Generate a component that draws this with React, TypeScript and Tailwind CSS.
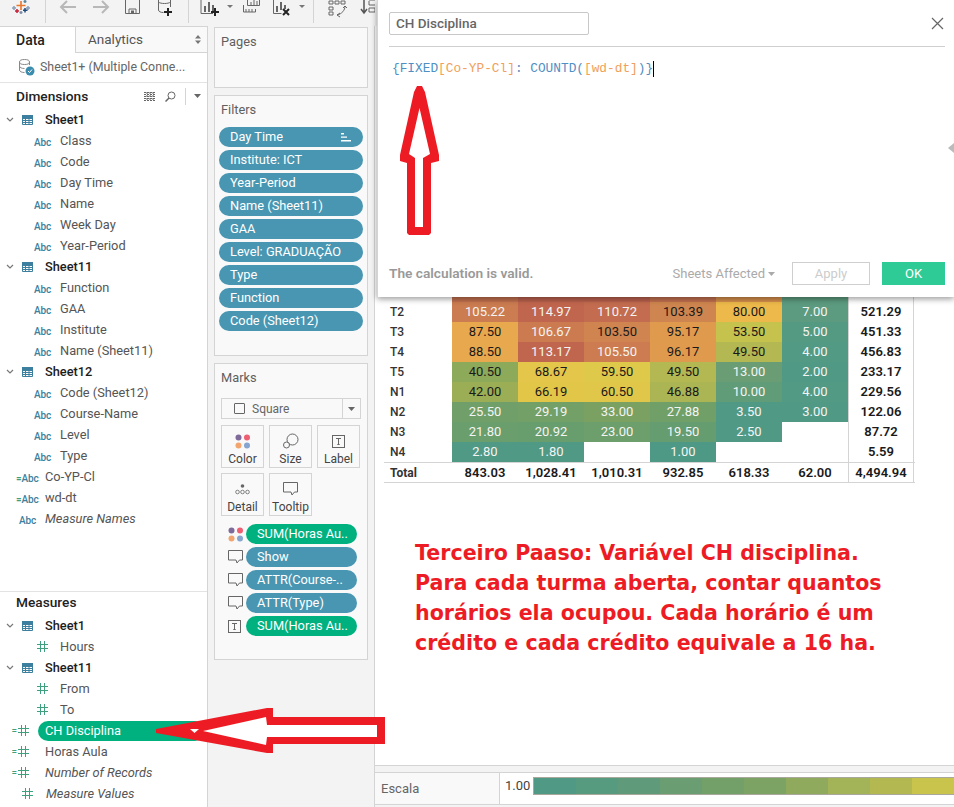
import React from "react";

const Chevron = () => (
  <svg width="8" height="6" viewBox="0 0 8 6" className="shrink-0">
    <path d="M1 1l3 3 3-3" fill="none" stroke="#777" strokeWidth="1.2" />
  </svg>
);

const TableIcon = () => (
  <svg width="11" height="10" viewBox="0 0 11 10" className="shrink-0">
    <path d="M.5.5h10v9H.5zM.5 3.5h10M.5 5.5h10M.5 7.5h10M3.5 3.5v6M7 3.5v6" fill="none" stroke="#3c7f9e" strokeWidth="1" />
    <rect x="0" y="0" width="11" height="3" fill="#3c7f9e" />
  </svg>
);

const Hash = () => (
  <svg width="11" height="11" viewBox="0 0 11 11" className="shrink-0">
    <path d="M3.5 0v11M7.5 0v11M0 3.5h11M0 7.5h11" stroke="#3fa07d" strokeWidth="1" fill="none" />
  </svg>
);

const Abc = ({ eq }: { eq?: boolean }) => (
  <span className="text-[10px] font-medium text-[#3c7f9e] leading-none tracking-[-0.1px]">
    {eq && <span className="text-[#3fa07d]">=</span>}
    Abc
  </span>
);

const SheetRow = ({ name }: { name: string }) => (
  <div className="h-[21px] flex items-center">
    <span className="ml-[6px] w-[16px] flex"><Chevron /></span>
    <TableIcon />
    <span className="ml-[12px] text-[12.8px] font-medium text-[#1c1c1c]">{name}</span>
  </div>
);

const DimRow = ({ name }: { name: string }) => (
  <div className="h-[21px] flex items-center">
    <span className="w-[34px]" />
    <span className="w-[26px]"><Abc /></span>
    <span className="text-[12.8px] text-[#555]">{name}</span>
  </div>
);

const CalcDim = ({ name }: { name: string }) => (
  <div className="h-[21px] flex items-center">
    <span className="w-[16px]" />
    <span className="w-[29px]"><Abc eq /></span>
    <span className="text-[12.8px] text-[#555]">{name}</span>
  </div>
);

const MeasRow = ({ name }: { name: string }) => (
  <div className="h-[21px] flex items-center">
    <span className="w-[37px]" />
    <span className="w-[23px]"><Hash /></span>
    <span className="text-[12.8px] text-[#555]">{name}</span>
  </div>
);

const CalcMeas = ({ name, italic }: { name: string; italic?: boolean }) => (
  <div className="h-[21px] flex items-center">
    <span className="w-[18px] text-[10px] text-[#3fa07d] leading-none text-right pr-[1px]">=</span>
    <span className="w-[27px]"><Hash /></span>
    <span className={italic ? "text-[12.8px] italic text-[#555]" : "text-[12.8px] text-[#555]"}>{name}</span>
  </div>
);

const Pill = ({ children, green, w, icon }: { children: React.ReactNode; green?: boolean; w: string; icon?: boolean }) => (
  <div
    className={`${w} h-[20px] rounded-full flex items-center justify-between pl-[11px] pr-[12px] text-[12.8px] text-white whitespace-nowrap ${green ? "bg-[#00b180]" : "bg-[#4996b2]"}`}
  >
    <span>{children}</span>
    {icon && (
      <svg width="10" height="10" viewBox="0 0 10 10">
        <path d="M0 1h3v1.4H0zM0 4.4h6v1.4H0zM0 8h10v1.6H0z" fill="#fff" />
      </svg>
    )}
  </div>
);

const Bubble = () => (
  <svg width="15" height="14" viewBox="0 0 15 14">
    <path d="M.5.5h14v9.5h-3l-2.5 3-1-3H.5z" fill="none" stroke="#666" strokeWidth="1" />
  </svg>
);

const Dots = () => (
  <svg width="16" height="15" viewBox="0 0 16 15">
    <circle cx="3.5" cy="3.5" r="3" fill="#7f6b9a" />
    <circle cx="12" cy="3.5" r="3" fill="#ee5f73" />
    <circle cx="3.5" cy="11.5" r="3" fill="#f2a56f" />
    <circle cx="12" cy="11.5" r="3" fill="#86a5cf" />
  </svg>
);

const TBox = () => (
  <svg width="13" height="13" viewBox="0 0 13 13">
    <rect x=".5" y=".5" width="12" height="12" fill="none" stroke="#666" />
    <path d="M4 3.5h5M6.5 3.5v6M5.3 9.5h2.4" stroke="#666" fill="none" />
  </svg>
);

const SizeIcon = () => (
  <svg width="16" height="16" viewBox="0 0 16 16">
    <circle cx="9.5" cy="6.5" r="5.5" fill="none" stroke="#666" />
    <circle cx="3.5" cy="12" r="3" fill="#f9f9f9" stroke="#666" />
  </svg>
);

const DetailIcon = () => (
  <svg width="15" height="11" viewBox="0 0 15 11">
    <circle cx="7.5" cy="2" r="1.8" fill="#666" />
    <circle cx="2.5" cy="8" r="1.8" fill="none" stroke="#666" strokeWidth=".8" />
    <circle cx="7.5" cy="8" r="1.8" fill="none" stroke="#666" strokeWidth=".8" />
    <circle cx="12.5" cy="8" r="1.8" fill="none" stroke="#666" strokeWidth=".8" />
  </svg>
);

const Card = ({ icon, label }: { icon: React.ReactNode; label: string }) => (
  <div className="h-[43px] border border-[#d4d4d4] flex flex-col items-center pt-[6px]">
    <div className="h-[18px] flex items-center">{icon}</div>
    <div className="text-[12px] leading-[16px] text-[#444] mt-[1px]">{label}</div>
  </div>
);

const Toolbar = () => (
  <div className="h-[26px] relative shrink-0 bg-[#f3f3f3]">
    <svg width="375" height="26" viewBox="0 0 375 26" className="block">
      <g strokeWidth="1.5" fill="none">
        <path d="M21 1v9M16.500 5.500h9" stroke="#e8762b" strokeWidth="1.6" />
        <path d="M14 6v4M12 8h4" stroke="#8aa0b8" />
        <path d="M28 6v4M26 8h4" stroke="#8aa0b8" />
        <path d="M17 9v4M15 11h4" stroke="#c72037" />
        <path d="M25 8v4.500M23 10.300h4.500" stroke="#1f4b7a" />
        <path d="M21 11v3M19.500 12.500h3" stroke="#7b8ea6" />
        <path d="M25 0v3M23.500 1.500h3" stroke="#5b879b" />
      </g>
      <path d="M45.500 0v23M188.500 0v23M313.500 0v23" stroke="#d4d4d4" />
      <path d="M76 7H61M67 1l-6 6 6 6M93 7h15M102 1l6 6-6 6" fill="none" stroke="#b8b8b8" strokeWidth="2" />
      <path d="M125.500 0v13.500h14V0M129 13.500V9h7v4.500" fill="none" stroke="#666" />
      <rect x="131" y="10.500" width="3" height="3" fill="#666" />
      <path d="M158.500 0v10c0 1.500 2 2.500 5 2.500M170.500 0v7" fill="none" stroke="#666" />
      <path d="M158.500 2c2 2 10 2 12 0" fill="none" stroke="#666" />
      <path d="M168 8v8M164 12h8" stroke="#222" strokeWidth="2" />
      <path d="M201 0v13.500h12" fill="none" stroke="#666" />
      <path d="M205 12V6M209 12V2M213 12V5" stroke="#666" strokeWidth="2" />
      <path d="M215 8v8M211 12h8" stroke="#222" strokeWidth="2" />
      <path d="M227 5h6l-3 3z" fill="#777" />
      <path d="M243.500 5v7h12V9M246 9v3M249 9v3M252 9v3" fill="none" stroke="#666" />
      <path d="M247.500 0v5.500h12V0M251 2v3M254 0v5M257 1v4" fill="none" stroke="#666" />
      <path d="M273.500 0v13.500h8" fill="none" stroke="#666" />
      <path d="M277 12V6M281 10V2M285 9V5" stroke="#666" strokeWidth="2" />
      <path d="M283 9l6 6M289 9l-6 6" stroke="#222" strokeWidth="2" />
      <path d="M299 5h6l-3 3z" fill="#777" />
      <path d="M329 1h4v3h-4zM335 1h4v3h-4zM341 1h4v3h-4zM329 7h4v3h-4zM329 12h4v3h-4z" fill="none" stroke="#666" />
      <path d="M345 6c0 4-3 8-8 9M345 6l-2 2M345 6l2 2M337 15l3-2M337 15l3 2" fill="none" stroke="#666" />
      <path d="M364 0v12M361 9l3 4 3-4" fill="none" stroke="#555" strokeWidth="1.500" />
      <path d="M369 0h6M369 1v4h6M369 8h6v4h-6z" fill="none" stroke="#666" />
    </svg>
  </div>
);

const LeftPanel = () => (
  <div className="w-[208px] shrink-0 bg-white border-r border-t border-[#d4d4d4] flex flex-col pb-[3px]">
    <div className="h-[26px] flex shrink-0">
      <div className="w-[75px] flex items-center pl-[16px] text-[14px] font-medium text-[#222]">Data</div>
      <div className="flex-1 bg-[#f9f9f9] border-l border-b border-[#d4d4d4] flex items-center pl-[12px] pr-[6px] justify-between">
        <span className="text-[13.5px] text-[#555]">Analytics</span>
        <svg width="6" height="9" viewBox="0 0 6 9">
          <path d="M3 0l3 3.500H0zM3 9L0 5.500h6z" fill="#777" />
        </svg>
      </div>
    </div>
    <div className="h-[30px] shrink-0 border-b border-[#e3e3e3] flex items-center pl-[18px]">
      <svg width="17" height="17" viewBox="0 0 17 17">
        <ellipse cx="6.500" cy="3" rx="5" ry="2.500" fill="none" stroke="#888" />
        <path d="M1.500 3v8c0 1.500 2 2.500 5 2.500M11.500 3v3M1.500 7c0 1.500 2 2.500 5 2.500" fill="none" stroke="#888" />
        <circle cx="12" cy="12" r="4.500" fill="#3c8cae" />
        <path d="M10 12l1.500 1.500 2.500-3" stroke="#fff" fill="none" />
      </svg>
      <span className="ml-[5px] text-[12.4px] text-[#666] whitespace-nowrap">Sheet1+ (Multiple Conne...</span>
    </div>
    <div className="h-[26px] shrink-0 flex items-center pl-[16px] pr-[6px]">
      <span className="text-[13.7px] font-medium text-[#222] flex-1">Dimensions</span>
      <svg width="12" height="9" viewBox="0 0 12 9">
        <path d="M0 .5h12M0 2.500h12M0 4.500h12M0 6.500h12M0 8.500h12M3 0v9M6 0v9M9 0v9" stroke="#666" strokeWidth="1" strokeDasharray="2 1" fill="none" />
      </svg>
      <svg width="11" height="11" viewBox="0 0 11 11" className="ml-[9px]">
        <circle cx="6.500" cy="4.500" r="3.500" fill="none" stroke="#666" />
        <path d="M4 7L.5 10.500" stroke="#666" strokeWidth="1.500" />
      </svg>
      <div className="w-px h-[17px] bg-[#d4d4d4] ml-[9px] mr-[8px]" />
      <svg width="7" height="4" viewBox="0 0 7 4">
        <path d="M0 0h7L3.500 4z" fill="#666" />
      </svg>
    </div>
    <SheetRow name="Sheet1" />
    {["Class", "Code", "Day Time", "Name", "Week Day", "Year-Period"].map((n) => <DimRow key={n} name={n} />)}
    <SheetRow name="Sheet11" />
    {["Function", "GAA", "Institute", "Name (Sheet11)"].map((n) => <DimRow key={n} name={n} />)}
    <SheetRow name="Sheet12" />
    {["Code (Sheet12)", "Course-Name", "Level", "Type"].map((n) => <DimRow key={n} name={n} />)}
    <CalcDim name="Co-YP-Cl" />
    <CalcDim name="wd-dt" />
    <div className="h-[21px] flex items-center">
      <span className="w-[19px]" />
      <span className="w-[26px]"><Abc /></span>
      <span className="text-[12.8px] italic text-[#555]">Measure Names</span>
    </div>
    <div className="flex-1" />
    <div className="border-t border-[#e3e3e3] h-[24px] shrink-0 flex items-center pl-[16px] pb-[3px] text-[13.7px] font-medium text-[#222]">Measures</div>
    <SheetRow name="Sheet1" />
    <MeasRow name="Hours" />
    <SheetRow name="Sheet11" />
    <MeasRow name="From" />
    <MeasRow name="To" />
    <div className="h-[21px] flex items-center relative">
      <span className="w-[18px] text-[10px] text-[#3fa07d] leading-none text-right pr-[1px]">=</span>
      <span className="w-[20px]"><Hash /></span>
      <div className="w-[167px] h-[20px] rounded-full bg-[#00b180] flex items-center pl-[7px] text-[12.8px] text-white">CH Disciplina</div>
    </div>
    <CalcMeas name="Horas Aula" />
    <CalcMeas name="Number of Records" italic />
    <div className="h-[21px] flex items-center">
      <span className="w-[22px]" />
      <span className="w-[24px]"><Hash /></span>
      <span className="text-[12.8px] italic text-[#555]">Measure Values</span>
    </div>
  </div>
);

const Panel = ({ title, h, children }: { title: string; h: string; children?: React.ReactNode }) => (
  <div className={`${h} w-[154px] border border-[#d4d4d4] bg-[#f9f9f9] px-[6px] shrink-0`}>
    <div className="h-[29px] pb-[2px] flex items-center text-[12.8px] text-[#5f5f5f]">{title}</div>
    {children}
  </div>
);

const MiddleColumn = () => (
  <div className="w-[167px] shrink-0 border-r border-[#d4d4d4] pl-[6px] pt-[1px] flex flex-col gap-[7px]">
    <Panel title="Pages" h="h-[61px]" />
    <Panel title="Filters" h="h-[261px]">
      <div className="flex flex-col gap-[3px] -ml-[2px] pt-[2px]">
        <Pill w="w-[144px]" icon>Day Time</Pill>
        <Pill w="w-[144px]">Institute: ICT</Pill>
        <Pill w="w-[144px]">Year-Period</Pill>
        <Pill w="w-[144px]">Name (Sheet11)</Pill>
        <Pill w="w-[144px]">GAA</Pill>
        <Pill w="w-[144px]">Level: GRADUAÇÃO</Pill>
        <Pill w="w-[144px]">Type</Pill>
        <Pill w="w-[144px]">Function</Pill>
        <Pill w="w-[144px]">Code (Sheet12)</Pill>
      </div>
    </Panel>
    <Panel title="Marks" h="h-[297px]">
      <div className="h-[21px] mt-[5px] border border-[#d4d4d4] bg-[#f9f9f9] flex items-center">
        <div className="flex-1 flex items-center pl-[12px]">
          <span className="w-[11px] h-[11px] border border-[#666] rounded-[1px]" />
          <span className="ml-[7px] text-[12px] text-[#666]">Square</span>
        </div>
        <div className="w-[18px] h-full border-l border-[#d4d4d4] flex items-center justify-center">
          <svg width="7" height="4" viewBox="0 0 7 4"><path d="M0 0h7L3.500 4z" fill="#666" /></svg>
        </div>
      </div>
      <div className="grid grid-cols-[43px_43px_43px] gap-[5px] mt-[6px]">
        <Card icon={<Dots />} label="Color" />
        <Card icon={<SizeIcon />} label="Size" />
        <Card icon={<TBox />} label="Label" />
        <Card icon={<DetailIcon />} label="Detail" />
        <Card icon={<Bubble />} label="Tooltip" />
      </div>
      <div className="flex flex-col gap-[3px] mt-[8px]">
        {[
          { i: <Dots />, t: "SUM(Horas Au..", g: true },
          { i: <Bubble />, t: "Show", g: false },
          { i: <Bubble />, t: "ATTR(Course-..", g: false },
          { i: <Bubble />, t: "ATTR(Type)", g: false },
          { i: <TBox />, t: "SUM(Horas Au..", g: true },
        ].map((r, k) => (
          <div key={k} className="flex items-center pl-[7px]">
            <span className="w-[18px] flex">{r.i}</span>
            <Pill w="w-[111px]" green={r.g}>{r.t}</Pill>
          </div>
        ))}
      </div>
    </Panel>
  </div>
);

type C = { v: string; c: string; d?: boolean };
const rows: { l: string; cells: (C | null)[]; t: string }[] = [
  { l: "", t: "", cells: [{ v: "", c: "#c3704f" }, { v: "", c: "#bb614e" }, { v: "", c: "#bb614e" }, { v: "", c: "#c3704f" }, { v: "", c: "#d78f4c" }, { v: "", c: "#5c9b7f" }] },
  { l: "T2", t: "521.29", cells: [{ v: "105.22", c: "#cb7c50" }, { v: "114.97", c: "#c1664e" }, { v: "110.72", c: "#c36c4f" }, { v: "103.39", c: "#cf854f", d: true }, { v: "80.00", c: "#edb94a", d: true }, { v: "7.00", c: "#5c9b7f" }] },
  { l: "T3", t: "451.33", cells: [{ v: "87.50", c: "#e8a84e", d: true }, { v: "106.67", c: "#cc7b50" }, { v: "103.50", c: "#d0844f", d: true }, { v: "95.17", c: "#e09a4e", d: true }, { v: "53.50", c: "#c6c24e", d: true }, { v: "5.00", c: "#549a83" }] },
  { l: "T4", t: "456.83", cells: [{ v: "88.50", c: "#e8a84e", d: true }, { v: "113.17", c: "#c1664e" }, { v: "105.50", c: "#cc7c50" }, { v: "96.17", c: "#e09a4e", d: true }, { v: "49.50", c: "#b3b852", d: true }, { v: "4.00", c: "#529a84" }] },
  { l: "T5", t: "233.17", cells: [{ v: "40.50", c: "#8da95a", d: true }, { v: "68.67", c: "#e3c64a", d: true }, { v: "59.50", c: "#dfc94a", d: true }, { v: "49.50", c: "#b3b852", d: true }, { v: "13.00", c: "#6a9d73" }, { v: "2.00", c: "#4f9985" }] },
  { l: "N1", t: "229.56", cells: [{ v: "42.00", c: "#9bae56", d: true }, { v: "66.19", c: "#e2c648", d: true }, { v: "60.50", c: "#e0c749", d: true }, { v: "46.88", c: "#acb553", d: true }, { v: "10.00", c: "#619c78" }, { v: "4.00", c: "#529a84" }] },
  { l: "N2", t: "122.06", cells: [{ v: "25.50", c: "#709f69" }, { v: "29.19", c: "#72a067" }, { v: "33.00", c: "#7ba162" }, { v: "27.88", c: "#70a068" }, { v: "3.50", c: "#509a85" }, { v: "3.00", c: "#509a85" }] },
  { l: "N3", t: "87.72", cells: [{ v: "21.80", c: "#6a9e6c" }, { v: "20.92", c: "#689d6d" }, { v: "23.00", c: "#6c9f6b" }, { v: "19.50", c: "#659c70" }, { v: "2.50", c: "#4f9985" }, null] },
  { l: "N4", t: "5.59", cells: [{ v: "2.80", c: "#4f9985" }, { v: "1.80", c: "#4f9985" }, null, { v: "1.00", c: "#4e9985" }, null, null] },
];
const totals = ["843.03", "1,028.41", "1,010.31", "932.85", "618.33", "62.00"];
const ramp = ["#4f9985", "#569a80", "#5f9b7a", "#6a9d72", "#72a068", "#7ca264", "#8fa95d", "#a3b358", "#b4b850", "#c9c44b"];

const Viz = () => (
  <div className="flex-1 bg-white border-b border-[#d4d4d4] pt-[256px]">
    <div className="ml-[9px] w-[531px]">
      {rows.map((r, i) => (
        <div key={i} className="flex h-[20px]">
          <div className="w-[68px] pl-[6px] flex items-center text-[12px] font-medium text-[#333]">{r.l}</div>
          {r.cells.map((c, j) => (
            <div
              key={j}
              className={`w-[66px] flex items-center justify-center text-[13px] ${c && c.d ? "text-[#1a1a1a]" : "text-[#f4f4f4]"}`}
              style={c ? { backgroundColor: c.c } : undefined}
            >
              {c ? c.v : ""}
            </div>
          ))}
          <div className="w-[66px] border-l border-r border-[#d4d4d4] flex items-center justify-center text-[13px] font-semibold text-[#1a1a1a]">{r.t}</div>
        </div>
      ))}
      <div className="flex h-[21px] border-t border-b border-[#d4d4d4]">
        <div className="w-[68px] pl-[6px] flex items-center text-[12px] font-bold text-[#333]">Total</div>
        {totals.map((t) => (
          <div key={t} className="w-[66px] flex items-center justify-center text-[13px] font-semibold text-[#1a1a1a]">{t}</div>
        ))}
        <div className="w-[66px] border-l border-r border-[#d4d4d4] flex items-center justify-center text-[13px] font-semibold text-[#1a1a1a]">4,494.94</div>
      </div>
    </div>
    <div className="mt-[55px] ml-[40px] font-['DejaVu_Sans',sans-serif] font-bold text-[20.6px] leading-[30px] text-[#ed1c24] whitespace-nowrap">
      <div>Terceiro Paaso: Variável CH disciplina.</div>
      <div>Para cada turma aberta, contar quantos</div>
      <div>horários ela ocupou. Cada horário é um</div>
      <div>crédito e cada crédito equivale a 16 ha.</div>
    </div>
  </div>
);

const Legend = () => (
  <div className="h-[33px] mt-[6px] mb-[2px] shrink-0 bg-[#f9f9f9] border-t border-b border-[#d4d4d4] flex">
    <div className="w-[125px] border-r border-[#d4d4d4] flex items-center pl-[6px] text-[13px] text-[#666]">Escala</div>
    <div className="flex-1 pt-[4px] flex bg-white overflow-hidden">
      <span className="ml-[5px] w-[29px] text-[13px] leading-[17px] text-[#444]">1.00</span>
      <div className="h-[18px] flex border border-[#a8a89c] w-[421px] shrink-0">
        {ramp.map((c) => (
          <div key={c} className="w-[42px] shrink-0" style={{ backgroundColor: c }} />
        ))}
      </div>
    </div>
  </div>
);

const Dialog = () => (
  <div className="absolute left-[377px] top-0 w-[577px] h-[297px] bg-white shadow-[0_2px_6px_rgba(0,0,0,0.4)] border-l border-[#d4d4d4] pl-[11px] pr-[9px] flex flex-col">
    <div className="h-[47px] border-b border-[#cfcfcf] flex items-start justify-between shrink-0">
      <div className="mt-[12px] w-[200px] h-[23px] border border-[#c8c8c8] rounded-[2px] flex items-center pl-[6px] text-[13.5px] font-medium text-[#666]">CH Disciplina</div>
      <svg width="13" height="13" viewBox="0 0 13 13" className="mt-[17px] mr-[1px]">
        <path d="M1 1l11 11M12 1L1 12" stroke="#666" strokeWidth="1.200" fill="none" />
      </svg>
    </div>
    <div className="mt-[14px] ml-[3px] h-[16px] flex items-center font-['Liberation_Mono',monospace] text-[12.8px] whitespace-pre">
      <span className="text-[#4f8fc4]">{"{FIXED"}</span>
      <span className="text-[#f0a05a]">[Co-YP-Cl]</span>
      <span className="text-[#4f8fc4]">: COUNTD(</span>
      <span className="text-[#f0a05a]">[wd-dt]</span>
      <span className="text-[#4f8fc4]">{")}"}</span>
      <span className="w-px h-[16px] bg-black" />
    </div>
    <div className="flex-1" />
    <div className="h-[23px] mb-[12px] flex items-center">
      <span className="text-[13.7px] font-semibold text-[#999] flex-1">The calculation is valid.</span>
      <span className="text-[13px] text-[#aaa]">Sheets Affected</span>
      <svg width="7" height="4" viewBox="0 0 7 4" className="ml-[3px]"><path d="M0 0h7L3.500 4z" fill="#aaa" /></svg>
      <div className="ml-[17px] w-[78px] h-[23px] border border-[#cfcfcf] flex items-center justify-center text-[13px] text-[#ccc]">Apply</div>
      <div className="ml-[12px] w-[63px] h-[23px] bg-[#2fcb97] flex items-center justify-center text-[13px] text-white">OK</div>
    </div>
    <svg width="6" height="10" viewBox="0 0 6 10" className="absolute right-0 top-[143px]">
      <path d="M6 0v10L0 5z" fill="#bbb" />
    </svg>
  </div>
);

const Arrows = () => (
  <svg width="954" height="807" viewBox="0 0 954 807" className="absolute left-0 top-0 pointer-events-none">
    <path
      fill="#ed1c24"
      fillRule="evenodd"
      d="M414 92L417 86H422L425 92L439 155V161L431 163V233L429 235H409L407 233V163L400 161V155ZM419.500 108L409 154L415 158V227H423V158L430 154Z"
    />
    <path fill="#ed1c24" d="M156 729L267 708H273V717H385V744H273V753H267L156 733Z" />
    <path fill="#fff" d="M203 731L266 717L267 725H377V737H267L266 745Z" />
    <path fill="#fff" d="M190 729H199L194.500 733Z" />
  </svg>
);

export default function App() {
  return (
    <div className="relative w-[954px] h-[807px] overflow-hidden bg-[#f3f3f3] font-[Roboto,sans-serif] flex flex-col">
      <Toolbar />
      <div className="flex flex-1 min-h-0">
        <LeftPanel />
        <MiddleColumn />
        <div className="flex-1 flex flex-col min-w-0">
          <Viz />
          <Legend />
        </div>
      </div>
      <Dialog />
      <Arrows />
    </div>
  );
}
